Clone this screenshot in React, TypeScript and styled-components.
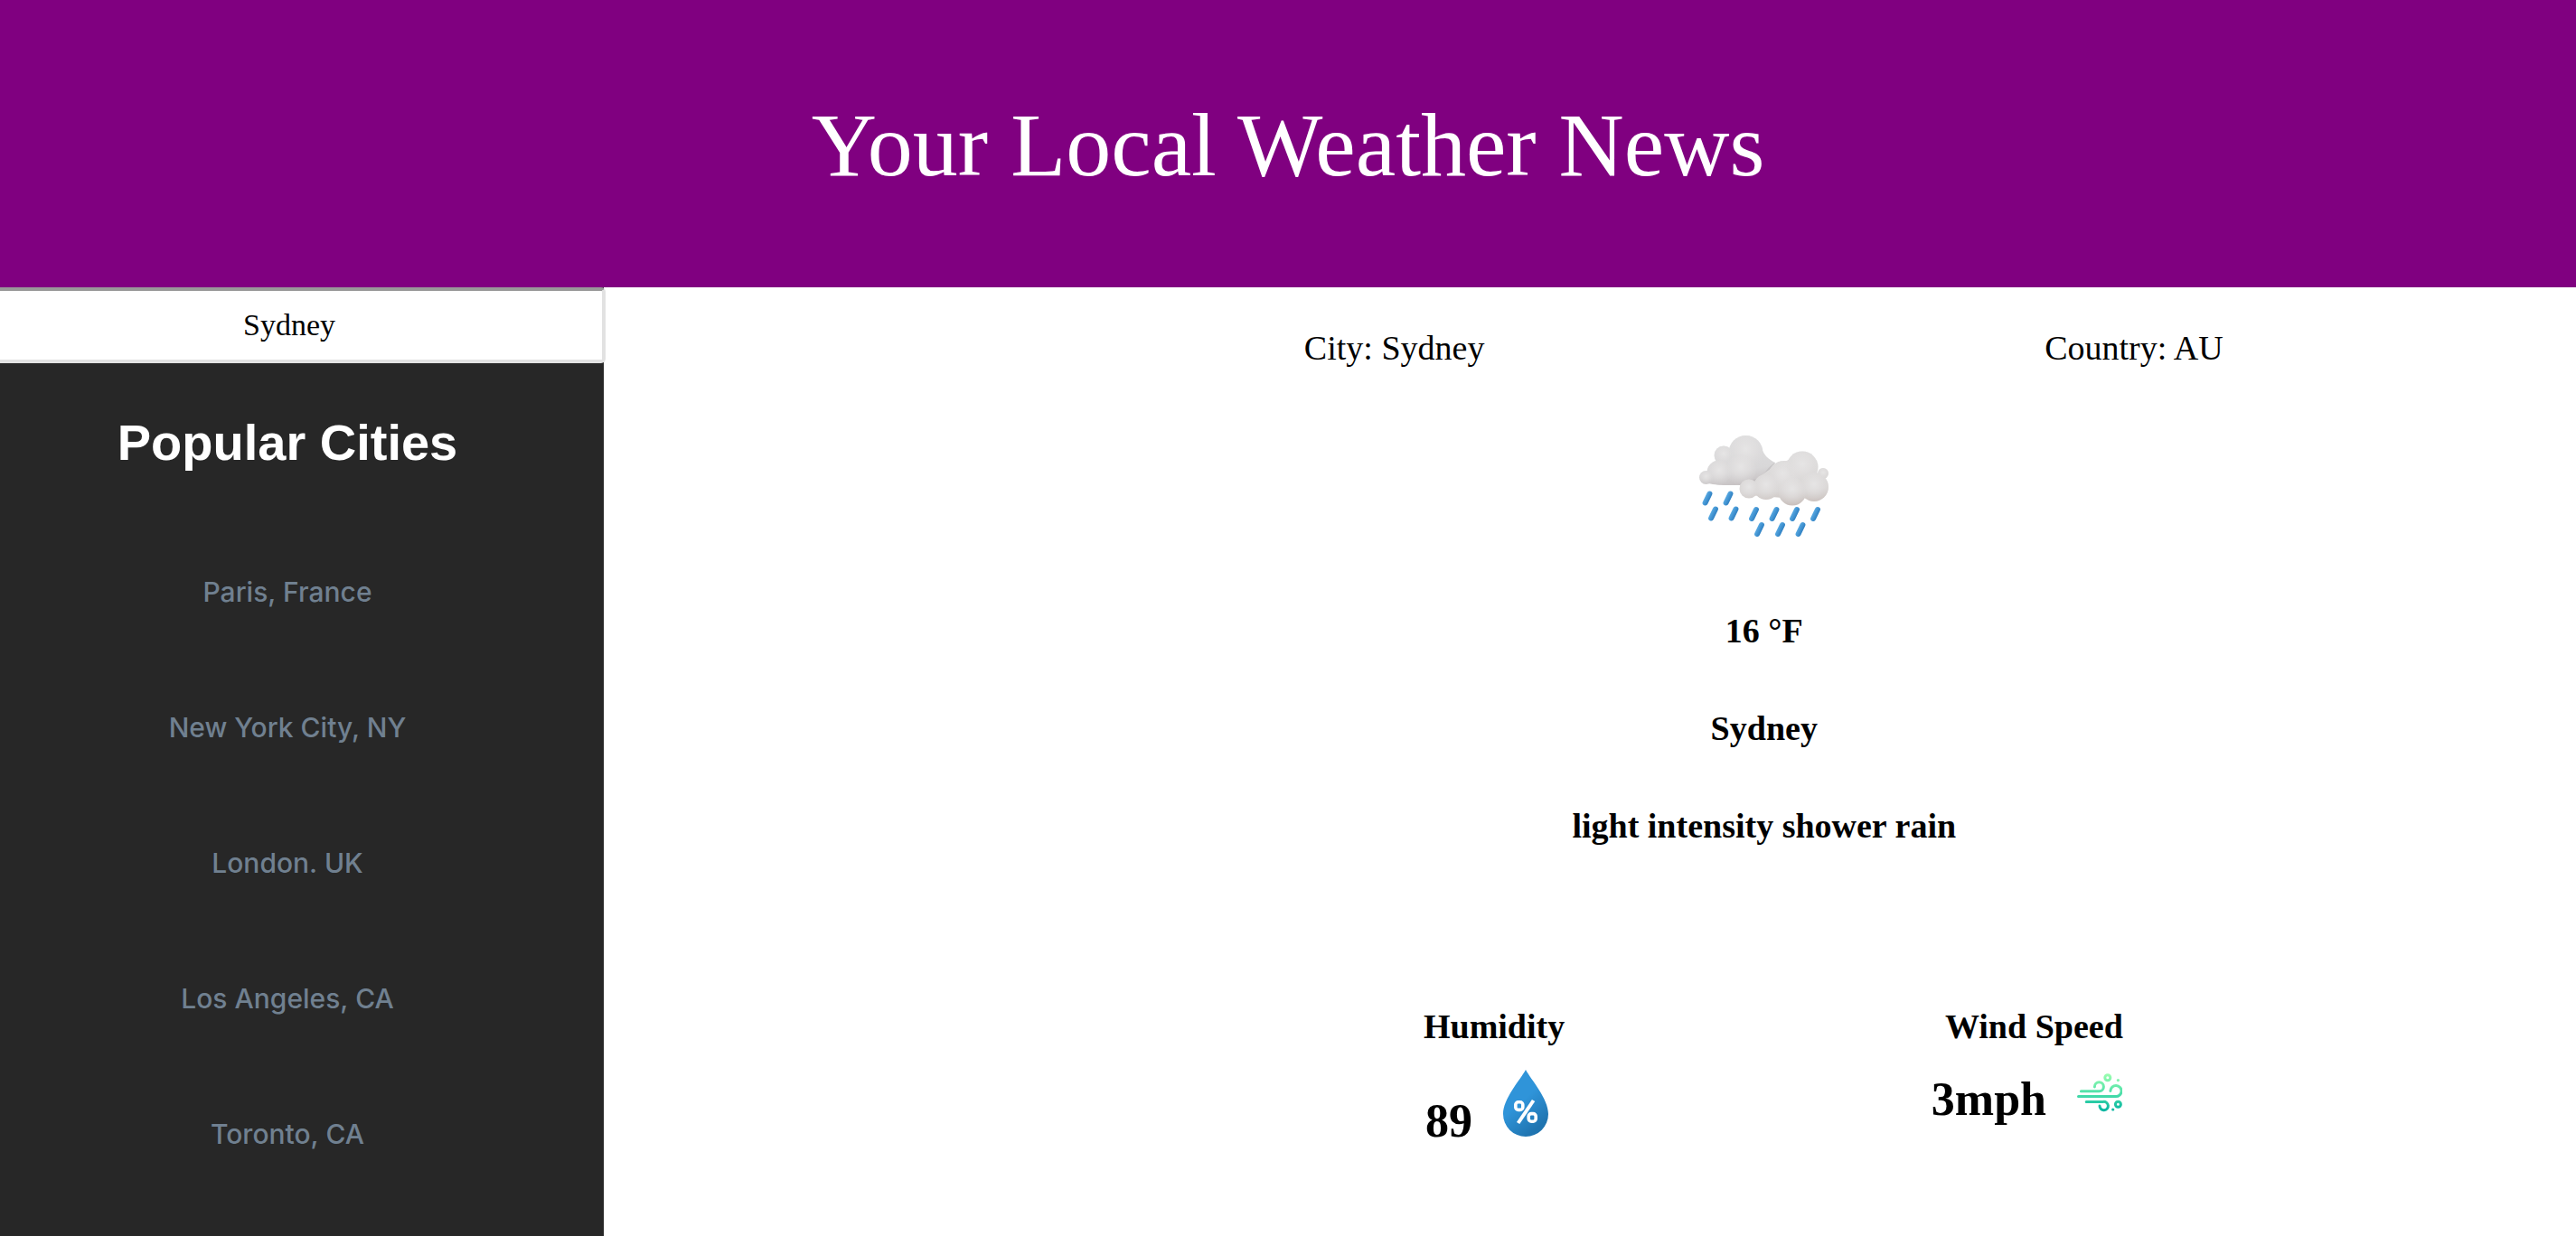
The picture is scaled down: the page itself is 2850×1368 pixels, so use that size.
import React, { useState } from "react";
import styled, { createGlobalStyle } from "styled-components";

const serif = `"Liberation Serif", "Times New Roman", serif`;

const GlobalStyle = createGlobalStyle`
  * { box-sizing: border-box; }
  body { margin: 0; background: #fff; color: #000; font-family: ${serif}; }
  h1, h2, p, ul, dl, dd { margin: 0; padding: 0; }
`;

const Page = styled.div`
  display: flex;
  flex-direction: column;
  min-height: 100vh;
`;

const Header = styled.header`
  padding: 102px 24px 98px;
  background: #800080;
  color: #fff;
  text-align: center;
`;

const Title = styled.h1`
  font-size: 100px;
  line-height: 118px;
  font-weight: 400;
`;

const Columns = styled.div`
  flex: 1;
  display: grid;
  grid-template-columns: 334fr 1091fr;
`;

const Sidebar = styled.aside`
  background: #272727;
  min-width: 0;
`;

const SearchBox = styled.input`
  display: block;
  width: calc(100% + 2px);
  height: 84px;
  padding: 0 26px 0 0;
  border: 4px solid #e2e2e2;
  border-top-color: #999;
  border-left: 0;
  border-radius: 0 5px 5px 0;
  background: #fff;
  color: #000;
  font-family: ${serif};
  font-size: 34px;
  text-align: center;
  outline: none;
`;

const Cities = styled.nav`
  padding: 56px 32px 36px 0;
  text-align: center;
`;

const CitiesTitle = styled.h2`
  margin-bottom: 58px;
  color: #fff;
  font: 700 56px/64px "Liberation Sans", Arial, sans-serif;
`;

const CityList = styled.ul`
  list-style: none;
`;

const CityLink = styled.a`
  display: block;
  color: #708090;
  font-family: Inter, sans-serif;
  font-size: 30px;
  font-weight: 500;
  line-height: 150px;
  text-decoration: none;
`;

const Report = styled.main`
  justify-self: end;
  width: 75%;
  margin-right: 80px;
  padding-top: 45px;
  display: flex;
  flex-direction: column;
  align-items: center;
  font-size: 38px;
  line-height: 44px;
`;

const Place = styled.div`
  width: 100%;
  display: grid;
  grid-template-columns: 1fr 1fr;
  text-align: center;
`;

const CloudArt = styled.svg`
  width: 144px;
  height: 114px;
  margin: 75px 0 80px;
`;

const Conditions = styled.div`
  display: grid;
  gap: 64px;
  text-align: center;
  font-weight: 700;
`;

const Metrics = styled.dl`
  width: 73%;
  margin-top: 178px;
  display: grid;
  grid-template-columns: 1fr 1fr;
  text-align: center;
  font-weight: 700;
`;

const Reading = styled.dd`
  display: flex;
  justify-content: center;
  align-items: baseline;
  gap: 34px;
  padding: 26px 16px 0 0;
  font-size: 52px;
  line-height: 56px;
`;

const ReadingIcon = styled.svg<{ $height: number }>`
  width: 50px;
  height: ${(p) => p.$height}px;
`;

const cities = ["Paris, France", "New York City, NY", "London. UK", "Los Angeles, CA", "Toronto, CA"];

const drops = [
  [9, 69.5], [32, 69.5],
  [15.5, 86.5], [38, 86.5], [60.5, 87], [83, 87], [105.5, 87], [128.5, 87],
  [66.5, 104], [89.5, 104], [112, 104],
];

const backPuffs = [[27, 22, 10.5], [51.5, 19, 19], [22, 41, 13.5], [7.5, 46.5, 7.5], [46, 38, 17]];
const frontPuffs = [[137, 42, 6], [94, 46, 18], [114, 35, 17.5], [127, 57, 16], [74, 57, 14], [55, 59, 10.5], [92, 44, 11], [103, 62, 15.5]];

function Puffs({ items }: { items: number[][] }) {
  return (
    <>
      {items.map(([cx, cy, r]) => (
        <circle key={`${cx}-${cy}`} cx={cx} cy={cy} r={r} />
      ))}
    </>
  );
}

function RainCloud() {
  return (
    <CloudArt viewBox="0 0 144 114" role="img" aria-label="Shower rain">
      <defs>
        <radialGradient id="glow" cx="0.5" cy="0.4" r="0.6">
          <stop offset="0" stopColor="#e6e5e5" />
          <stop offset="0.5" stopColor="#e2e0e0" stopOpacity="0.6" />
          <stop offset="1" stopColor="#dad8d8" stopOpacity="0" />
        </radialGradient>
        <linearGradient id="back" gradientUnits="userSpaceOnUse" x1="40" y1="0" x2="48" y2="55">
          <stop offset="0" stopColor="#dfdfe0" />
          <stop offset="0.7" stopColor="#d8d7d8" />
          <stop offset="1" stopColor="#c6c1c2" />
        </linearGradient>
        <linearGradient id="front" gradientUnits="userSpaceOnUse" x1="98" y1="18" x2="102" y2="78">
          <stop offset="0" stopColor="#e0dfdf" />
          <stop offset="0.7" stopColor="#dad7d6" />
          <stop offset="1" stopColor="#c8beba" />
        </linearGradient>
        <linearGradient id="drop" x1="0" y1="0" x2="1" y2="0">
          <stop offset="0" stopColor="#58a9e2" />
          <stop offset="1" stopColor="#2f80c2" />
        </linearGradient>
        <filter id="soft" x="-5%" y="-5%" width="110%" height="110%">
          <feGaussianBlur stdDeviation="0.4" />
        </filter>
      </defs>
      <g filter="url(#soft)">
        <g fill="url(#back)">
          <Puffs items={backPuffs} />
          <path d="M67 9C71 22 76 26 84 30L76 46L60 54C42 55 22 56 10 53L24 26Z" />
        </g>
        <g fill="url(#glow)">
          <Puffs items={backPuffs} />
        </g>
        <path d="M84 30C76 34 74 42 64 48C58 49 52 50 47 54C60 54 70 50 78 42Z" fill="#bdb9ba" opacity="0.6" />
        <g fill="url(#front)">
          <Puffs items={frontPuffs} />
          <path d="M80 36C88 27 96 30 100 26L130 42L134 68L104 70L56 66L66 46Z" />
        </g>
        <g fill="url(#glow)">
          <Puffs items={frontPuffs} />
        </g>
      </g>
      {drops.map(([x, y]) => (
        <rect
          key={`${x}-${y}`}
          x={x - 3}
          y={y - 8.5}
          width="6"
          height="17"
          rx="3"
          fill="url(#drop)"
          transform={`rotate(26 ${x} ${y})`}
        />
      ))}
    </CloudArt>
  );
}

function HumidityIcon() {
  return (
    <ReadingIcon $height={74} viewBox="0 0 50 74" aria-hidden="true">
      <defs>
        <linearGradient id="water" x1="0.3" y1="0.3" x2="0.7" y2="1">
          <stop offset="0.25" stopColor="#2f94d9" />
          <stop offset="0.9" stopColor="#1f74b0" />
        </linearGradient>
      </defs>
      <path d="M25 0C31 11 50 32 50 49A25 25 0 0 1 0 49C0 32 19 11 25 0Z" fill="url(#water)" />
      <g fill="none" stroke="#fff" strokeWidth="3.6">
        <rect x="13.8" y="35.8" width="8" height="8.6" rx="3" />
        <rect x="28.2" y="48.6" width="8" height="8.6" rx="3" />
        <path d="M33.6 34L16.6 59" strokeWidth="4" />
      </g>
    </ReadingIcon>
  );
}

function WindIcon() {
  return (
    <ReadingIcon $height={50} viewBox="0 0 50 50" aria-hidden="true">
      <defs>
        <linearGradient id="breeze" gradientUnits="userSpaceOnUse" x1="0" y1="4" x2="0" y2="46">
          <stop offset="0" stopColor="#9dffb0" />
          <stop offset="0.55" stopColor="#4adea9" />
          <stop offset="1" stopColor="#02b3a0" />
        </linearGradient>
      </defs>
      <g fill="none" stroke="url(#breeze)" strokeWidth="3" strokeLinecap="round">
        <path d="M4.4 23.8H24.5A5 5 0 1 0 19.4 18.9" />
        <path d="M1.5 29.6H42.5A6.1 6.1 0 1 0 36.9 23.4" />
        <path d="M10.2 35.4H29A4.7 4.7 0 1 1 25 40" />
        <circle cx="33.8" cy="8.8" r="3" />
        <circle cx="45.4" cy="38.2" r="3" />
      </g>
      <circle cx="45.4" cy="11.6" r="1.6" fill="url(#breeze)" />
      <circle cx="39.7" cy="44" r="1.6" fill="url(#breeze)" />
    </ReadingIcon>
  );
}

export default function App() {
  const [query, setQuery] = useState("Sydney");

  return (
    <Page>
      <GlobalStyle />
      <Header>
        <Title>Your Local Weather News</Title>
      </Header>
      <Columns>
        <Sidebar>
          <SearchBox
            type="text"
            aria-label="City"
            value={query}
            onChange={(event) => setQuery(event.target.value)}
          />
          <Cities aria-labelledby="popular">
            <CitiesTitle id="popular">Popular Cities</CitiesTitle>
            <CityList>
              {cities.map((city) => (
                <li key={city}>
                  <CityLink href="#">{city}</CityLink>
                </li>
              ))}
            </CityList>
          </Cities>
        </Sidebar>
        <Report>
          <Place>
            <p>City: Sydney</p>
            <p>Country: AU</p>
          </Place>
          <RainCloud />
          <Conditions>
            <p>16 °F</p>
            <p>Sydney</p>
            <p>light intensity shower rain</p>
          </Conditions>
          <Metrics>
            <div>
              <dt>Humidity</dt>
              <Reading>
                89
                <HumidityIcon />
              </Reading>
            </div>
            <div>
              <dt>Wind Speed</dt>
              <Reading>
                3mph
                <WindIcon />
              </Reading>
            </div>
          </Metrics>
        </Report>
      </Columns>
    </Page>
  );
}
